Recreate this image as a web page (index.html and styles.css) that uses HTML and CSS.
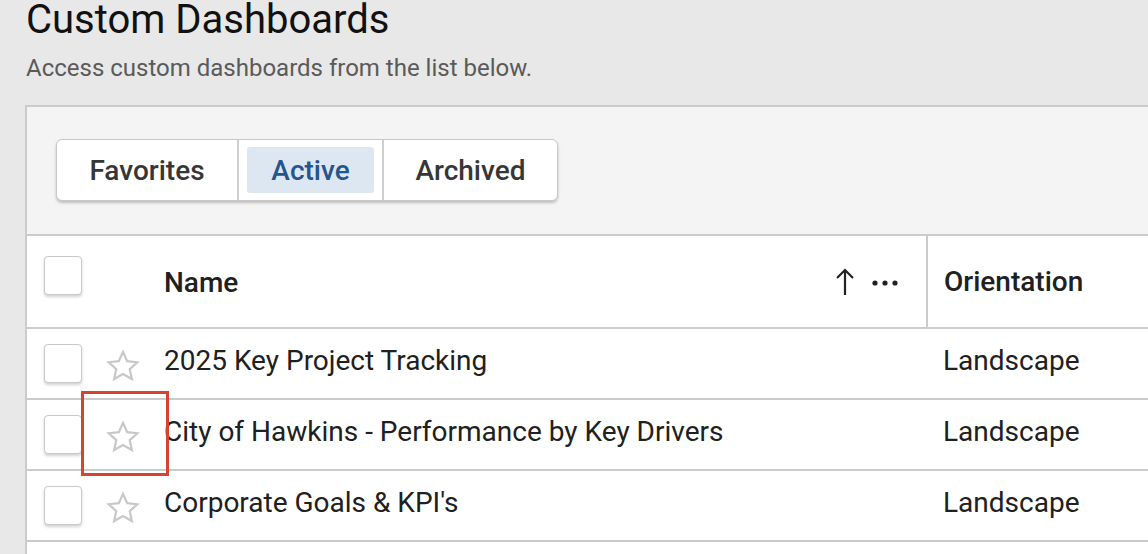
FILE: index.html
```html
<!DOCTYPE html>
<html>
<head>
<meta charset="utf-8">
<link rel="stylesheet" href="styles.css">
</head>
<body>
<div class="page">
  <header class="head">
    <h1 class="title">Custom Dashboards</h1>
    <p class="subtitle">Access custom dashboards from the list below.</p>
  </header>
  <section class="panel">
    <div class="toolbar">
      <div class="segmented">
        <button class="seg seg-fav">Favorites</button>
        <button class="seg seg-active"><span class="seg-hl">Active</span></button>
        <button class="seg seg-arch">Archived</button>
      </div>
    </div>
    <div class="table">
      <div class="row header">
        <div class="c-sel"><span class="cb"></span></div>
        <div class="c-name">
          <span class="hname">Name</span>
          <span class="hactions">
            <svg class="arrow" width="20" height="28" viewBox="0 0 20 28"><path d="M10 27V2M2 10l8-8 8 8" fill="none" stroke="#222" stroke-width="2.2"/></svg>
            <svg class="dots" width="28" height="8" viewBox="0 0 28 8"><circle cx="4" cy="4" r="2.6" fill="#222"/><circle cx="14" cy="4" r="2.6" fill="#222"/><circle cx="24" cy="4" r="2.6" fill="#222"/></svg>
          </span>
        </div>
        <div class="c-orient horient">Orientation</div>
      </div>
      <div class="row">
        <div class="c-sel"><span class="cb"></span><span class="star"><svg width="36" height="36" viewBox="0 0 24 24"><path d="M12 2.6l2.8 6.2 6.7.7-5 4.6 1.4 6.6L12 17.3l-5.9 3.4 1.4-6.6-5-4.6 6.7-.7z" fill="none" stroke="#c8c8c8" stroke-width="1.5" stroke-linejoin="miter"/></svg></span></div>
        <div class="c-name">2025 Key Project Tracking</div>
        <div class="c-orient">Landscape</div>
      </div>
      <div class="row">
        <div class="c-sel"><span class="cb"></span><span class="star"><svg width="36" height="36" viewBox="0 0 24 24"><path d="M12 2.6l2.8 6.2 6.7.7-5 4.6 1.4 6.6L12 17.3l-5.9 3.4 1.4-6.6-5-4.6 6.7-.7z" fill="none" stroke="#c8c8c8" stroke-width="1.5" stroke-linejoin="miter"/></svg></span><span class="focus-box"></span></div>
        <div class="c-name">City of Hawkins - Performance by Key Drivers</div>
        <div class="c-orient">Landscape</div>
      </div>
      <div class="row">
        <div class="c-sel"><span class="cb"></span><span class="star"><svg width="36" height="36" viewBox="0 0 24 24"><path d="M12 2.6l2.8 6.2 6.7.7-5 4.6 1.4 6.6L12 17.3l-5.9 3.4 1.4-6.6-5-4.6 6.7-.7z" fill="none" stroke="#c8c8c8" stroke-width="1.5" stroke-linejoin="miter"/></svg></span></div>
        <div class="c-name">Corporate Goals &amp; KPI's</div>
        <div class="c-orient">Landscape</div>
      </div>
      <div class="row empty">
        <div class="c-sel"><span class="cb"></span></div>
      </div>
    </div>
  </section>
</div>
</body>
</html>
```
FILE: styles.css
```css
html, body {
  margin: 0;
  padding: 0;
  width: 1148px;
  height: 554px;
  overflow: hidden;
  background: #e8e8e8;
  font-family: Roboto, "Liberation Sans", sans-serif;
}
.page {
  display: flex;
  flex-direction: column;
}
.head {
  padding-left: 26px;
}
.title {
  margin: 0;
  font-size: 40px;
  font-weight: 400;
  line-height: 40px;
  color: #111;
}
.subtitle {
  margin: 0;
  padding-top: 14px;
  font-size: 24px;
  line-height: 28px;
  color: #5a5a5a;
}
.panel {
  margin-left: 25px;
  margin-top: 23px;
  width: 1200px;
  border-left: 2px solid #cbcbcb;
  border-top: 2px solid #cbcbcb;
  background: #fff;
}
.toolbar {
  background: #f4f4f4;
  height: 129px;
  border-bottom: 2px solid #cbcbcb;
  padding: 32px 0 0 29px;
  box-sizing: border-box;
}
.segmented {
  display: inline-flex;
  height: 62px;
  box-sizing: border-box;
  border: 1px solid #c8c8c8;
  border-radius: 6px;
  background: #fff;
  box-shadow: 0 2px 3px rgba(0,0,0,0.22);
  overflow: hidden;
}
.seg {
  border: 0;
  background: transparent;
  font-family: Roboto, "Liberation Sans", sans-serif;
  font-size: 28px;
  font-weight: 500;
  color: #363636;
  padding: 0;
  display: flex;
  align-items: center;
  justify-content: center;
  box-sizing: border-box;
}
.seg + .seg {
  border-left: 2px solid #cfcfcf;
}
.seg-fav { width: 180px; }
.seg-active { width: 145px; padding: 7px 8px; }
.seg-arch { width: 175px; }
.seg-hl {
  flex: 1;
  align-self: stretch;
  display: flex;
  align-items: center;
  justify-content: center;
  background: #dde7f1;
  border-radius: 3px;
  color: #245590;
}
.table {
  display: flex;
  flex-direction: column;
}
.row {
  display: flex;
  align-items: stretch;
  height: 69px;
  border-bottom: 2px solid #cbcbcb;
  font-size: 28px;
  color: #202020;
}
.row.header {
  height: 91px;
  font-weight: 500;
}
.row.empty {
  border-bottom: 0;
}
.c-sel {
  position: relative;
  width: 137px;
  flex: none;
  display: flex;
  align-items: center;
  padding-left: 17px;
  box-sizing: border-box;
}
.cb {
  width: 38px;
  height: 39px;
  box-sizing: border-box;
  border: 1px solid #c9c9c9;
  border-radius: 4px;
  background: #fff;
  box-shadow: 0 2px 3px rgba(0,0,0,0.18);
  flex: none;
}
.header .cb {
  margin-top: -13px;
}
.star {
  margin-left: 23px;
  display: flex;
  margin-top: 4px;
}
.focus-box {
  position: absolute;
  left: 54px;
  top: -9px;
  width: 88px;
  height: 85px;
  box-sizing: border-box;
  border: 3px solid #d8432e;
}
.c-name {
  width: 762px;
  flex: none;
  display: flex;
  align-items: center;
  justify-content: space-between;
  box-sizing: border-box;
  padding-right: 27px;
  padding-bottom: 6px;
}
.header .c-name {
  padding-bottom: 0;
}
.hname {
  margin-top: 2px;
}
.hactions {
  display: flex;
  align-items: center;
  gap: 16px;
}
.dots { margin-top: 2px; }
.c-orient {
  flex: 1;
  display: flex;
  align-items: center;
  padding-left: 17px;
  padding-bottom: 6px;
}
.horient {
  border-left: 2px solid #cbcbcb;
  padding-left: 16px;
  padding-bottom: 0;
}
```
